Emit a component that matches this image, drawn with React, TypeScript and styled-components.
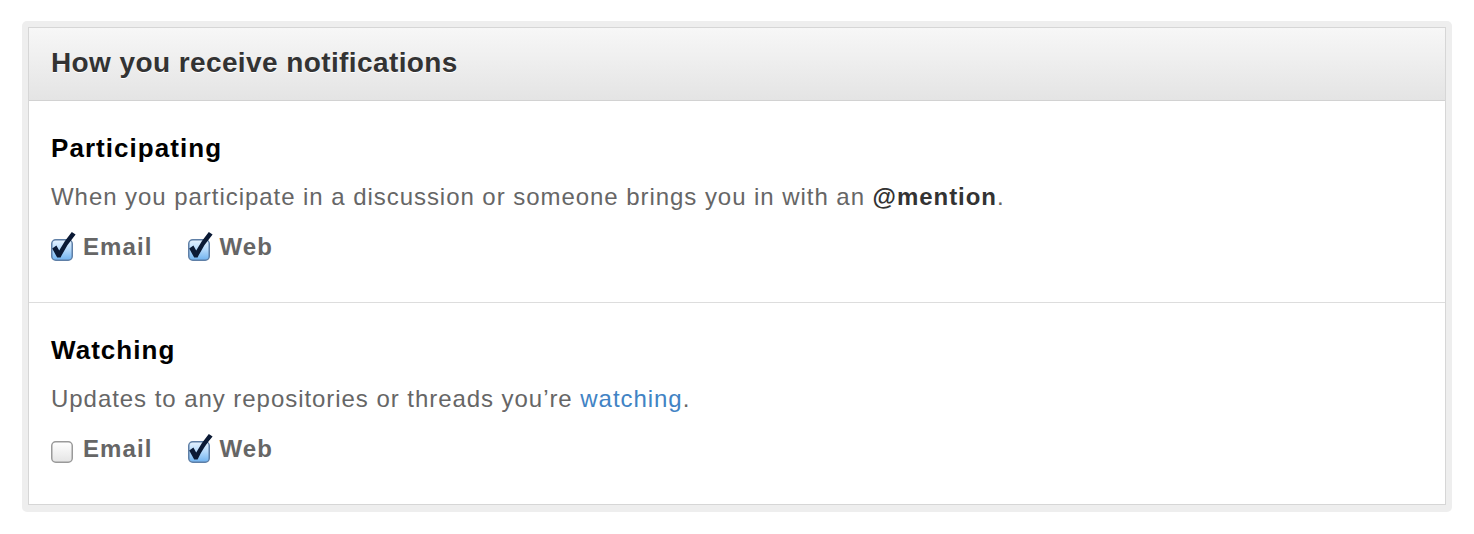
import React from "react";
import styled, { createGlobalStyle } from "styled-components";

const Global = createGlobalStyle`
  html, body { margin: 0; padding: 0; background: #fff; }
  body { font-family: "Liberation Sans", Arial, Helvetica, sans-serif; }
`;

const Page = styled.div`
  padding: 21px 22px;
`;

const Outer = styled.div`
  width: 1418px;
  padding: 6px 6px 7px;
  background: #eeeeee;
  border-radius: 5px;
`;

const Box = styled.div`
  border: 1px solid #d6d6d6;
  background: #fff;
`;

const Header = styled.div`
  height: 73px;
  box-sizing: border-box;
  display: flex;
  align-items: center;
  padding: 0 22px 2px;
  background: linear-gradient(#f7f7f7, #e4e4e4);
  border-bottom: 1px solid #d2d2d2;
`;

const HeaderTitle = styled.h3`
  margin: 0;
  font-size: 28px;
  line-height: 36px;
  font-weight: bold;
  letter-spacing: 0.4px;
  color: #333;
  text-shadow: 0 1px 0 #fff;
`;

const Section = styled.div<{ $last?: boolean }>`
  padding: 29px 22px 37px;
  border-bottom: ${(p) => (p.$last ? "none" : "1px solid #dddddd")};
  height: 135px;
`;

const Title = styled.h4`
  margin: 0;
  font-size: 26px;
  line-height: 36px;
  font-weight: bold;
  letter-spacing: 1.05px;
  color: #000;
`;

const Desc = styled.p`
  margin: 13px 0 0;
  font-size: 24px;
  line-height: 36px;
  letter-spacing: 0.95px;
  color: #666;
`;

const Strong = styled.strong`
  color: #333;
`;

const Link = styled.a`
  color: #4183c4;
  text-decoration: none;
`;

const Options = styled.div`
  margin-top: 14px;
  display: flex;
  align-items: center;
  gap: 35px;
  height: 36px;
`;

const Option = styled.label`
  display: flex;
  align-items: center;
  gap: 10px;
  font-size: 24px;
  line-height: 36px;
  font-weight: bold;
  letter-spacing: 1.1px;
  color: #666;
`;

const CheckSvg = styled.svg`
  display: block;
  overflow: visible;
  flex: none;
  margin-top: 5px;
`;

let uid = 0;

function Checkbox({ checked }: { checked: boolean }) {
  const id = React.useMemo(() => `cb${uid++}`, []);
  return (
    <CheckSvg width="22" height="22" viewBox="0 0 22 22">
      <defs>
        <linearGradient id={`${id}on`} x1="0" y1="0" x2="0" y2="1">
          <stop offset="0" stopColor="#e6f3ff" />
          <stop offset="0.5" stopColor="#b2d8fb" />
          <stop offset="1" stopColor="#6fb2ef" />
        </linearGradient>
        <linearGradient id={`${id}off`} x1="0" y1="0" x2="0" y2="1">
          <stop offset="0" stopColor="#ffffff" />
          <stop offset="1" stopColor="#e4e4e4" />
        </linearGradient>
      </defs>
      <rect
        x="0.75"
        y="0.75"
        width="20.5"
        height="20.5"
        rx="4"
        fill={checked ? `url(#${id}on)` : `url(#${id}off)`}
        stroke={checked ? "#5f7fa6" : "#9a9a9a"}
        strokeWidth="1.5"
      />
      {checked && (
        <path
          d="M1.2 9.6 L5.4 6.6 L8.2 11.6 Q14 1 20.8 -7 L24.6 -4.4 Q15.5 6 9.6 18.4 L6.2 18.6 Z"
          fill="#0b1a35"
        />
      )}
    </CheckSvg>
  );
}

export default function App() {
  return (
    <>
      <Global />
      <Page>
        <Outer>
          <Box>
            <Header>
              <HeaderTitle>How you receive notifications</HeaderTitle>
            </Header>
            <Section>
              <Title>Participating</Title>
              <Desc>
                When you participate in a discussion or someone brings you in with an{" "}
                <Strong>@mention</Strong>.
              </Desc>
              <Options>
                <Option>
                  <Checkbox checked />
                  Email
                </Option>
                <Option>
                  <Checkbox checked />
                  Web
                </Option>
              </Options>
            </Section>
            <Section $last>
              <Title>Watching</Title>
              <Desc>
                Updates to any repositories or threads you’re{" "}
                <Link href="#">watching</Link>.
              </Desc>
              <Options>
                <Option>
                  <Checkbox checked={false} />
                  Email
                </Option>
                <Option>
                  <Checkbox checked />
                  Web
                </Option>
              </Options>
            </Section>
          </Box>
        </Outer>
      </Page>
    </>
  );
}
